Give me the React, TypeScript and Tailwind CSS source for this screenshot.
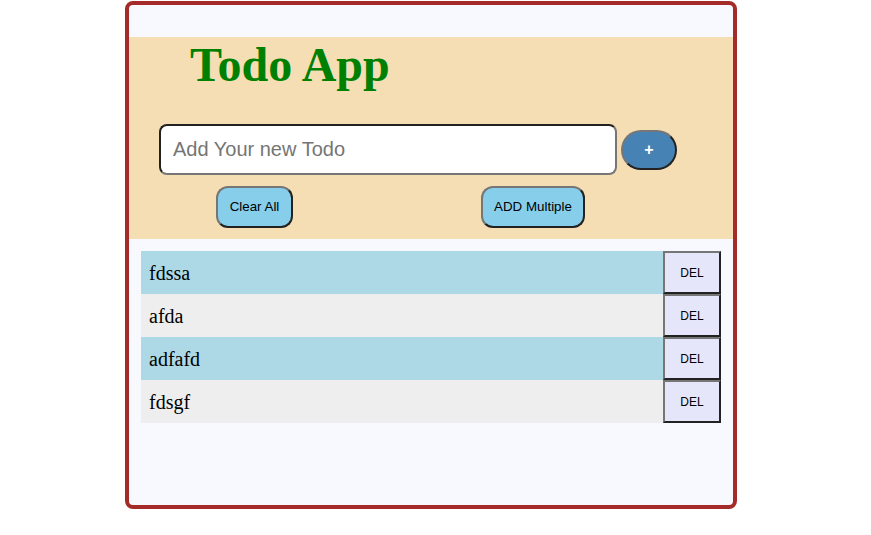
const todos = ["fdssa", "afda", "adfafd", "fdsgf"];

const outset =
  "border-2 border-t-[#767676] border-l-[#767676] border-r-[#222] border-b-[#222]";

export default function App() {
  return (
    <div className="min-h-screen bg-white">
      <div className="ml-[125px] mt-px flex h-[508px] w-[612px] flex-col rounded-lg border-4 border-[#a52a2a] bg-[#f8f8ff]">
        <div className="mt-8 bg-[#f5deb3] pb-[11px] pt-px">
          <h1 className="ml-[61px] font-['Liberation_Serif',serif] text-[48px] font-bold leading-[53px] text-[#008000]">
            Todo App
          </h1>
          <div className="ml-[30px] mt-[33px] flex items-center gap-1">
            <input
              type="text"
              placeholder="Add Your new Todo"
              className="h-[51px] w-[458px] rounded-lg border-2 border-t-[#222] border-l-[#222] border-r-[#767676] border-b-[#767676] bg-white px-3 font-['Liberation_Sans',Arial,sans-serif] text-[20px] text-black outline-none placeholder:text-[#757575]"
            />
            <button
              className={`h-10 w-14 rounded-full bg-[#4682b4] font-['Liberation_Sans',Arial,sans-serif] text-[16px] font-bold text-white ${outset}`}
            >
              +
            </button>
          </div>
          <div className="ml-[87px] mt-[11px] flex gap-[188px]">
            <button
              className={`h-[42px] w-[77px] rounded-xl bg-[#87ceeb] font-['Liberation_Sans',Arial,sans-serif] text-[13.33px] text-black ${outset}`}
            >
              Clear All
            </button>
            <button
              className={`h-[42px] w-[104px] rounded-xl bg-[#87ceeb] font-['Liberation_Sans',Arial,sans-serif] text-[13.33px] text-black ${outset}`}
            >
              ADD Multiple
            </button>
          </div>
        </div>
        <ul className="mx-3 mt-3">
          {todos.map((t, i) => (
            <li key={t} className="flex h-[43px]">
              <span
                className={`flex flex-1 items-center pl-2 font-['Liberation_Serif',serif] text-[20px] text-black ${
                  i % 2 === 0 ? "bg-[#add8e6]" : "bg-[#eeeeee]"
                }`}
              >
                {t}
              </span>
              <button
                className={`h-[43px] w-[58px] bg-[#e6e6fa] font-['Liberation_Sans',Arial,sans-serif] text-[12px] text-black ${outset}`}
              >
                DEL
              </button>
            </li>
          ))}
        </ul>
      </div>
    </div>
  );
}
